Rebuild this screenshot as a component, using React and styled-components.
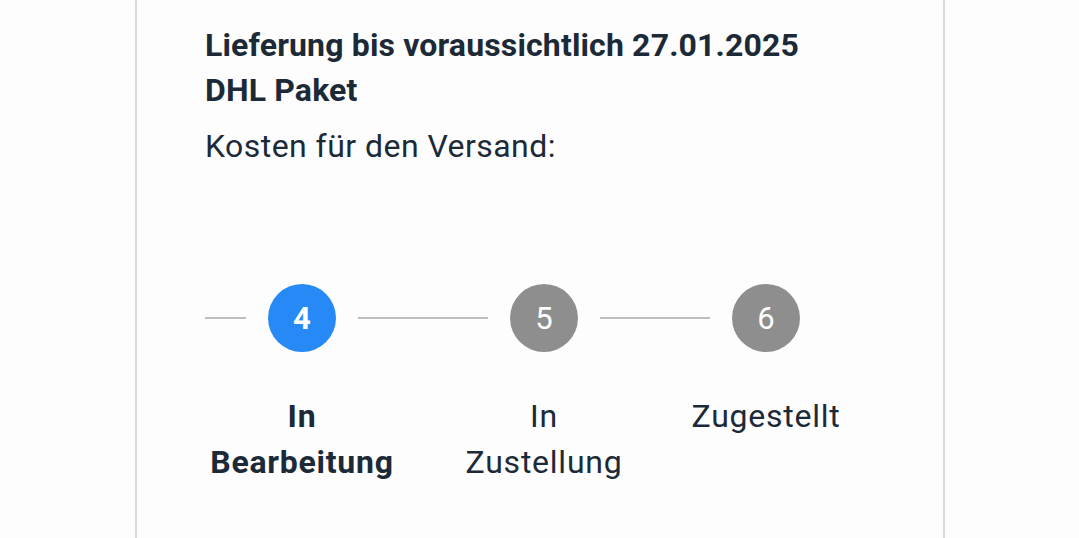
import React from 'react'
import styled, { createGlobalStyle } from 'styled-components'

const GlobalStyle = createGlobalStyle`
  html, body {
    margin: 0;
    padding: 0;
    background: #fdfdfd;
  }
  body {
    font-family: Roboto, "Noto Sans", "Liberation Sans", sans-serif;
    color: #1c2a38;
  }
`

const Page = styled.div`
  width: 1079px;
  height: 538px;
  overflow: hidden;
  display: flex;
`

const Card = styled.div`
  margin-left: 135px;
  width: 810px;
  height: 538px;
  box-sizing: border-box;
  border-left: 2px solid #d9d9d9;
  border-right: 2px solid #d9d9d9;
  padding: 23px 0 0 68px;
  display: flex;
  flex-direction: column;
`

const Heading = styled.div`
  font-size: 32px;
  font-weight: 700;
  line-height: 45px;
  letter-spacing: 0.15px;
`

const Cost = styled.div`
  margin-top: 11px;
  font-size: 32px;
  font-weight: 400;
  line-height: 45px;
  letter-spacing: 0.45px;
`

const Stepper = styled.div`
  margin-top: 115px;
  display: flex;
  align-items: flex-start;
`

const Connector = styled.div`
  width: ${p => p.$w}px;
  height: 2px;
  margin-top: 33px;
  background: #bebebe;
  flex-shrink: 0;
`

const Step = styled.div`
  width: 112px;
  flex-shrink: 0;
  display: flex;
  flex-direction: column;
  align-items: center;
`

const Circle = styled.div`
  width: 68px;
  height: 68px;
  border-radius: 50%;
  background: ${p => (p.$active ? '#2689f6' : '#8e8e8e')};
  color: #fff;
  display: flex;
  align-items: center;
  justify-content: center;
  font-size: 31px;
  font-weight: ${p => (p.$active ? 700 : 400)};
`

const Label = styled.div`
  margin-top: 41px;
  width: 260px;
  text-align: center;
  font-size: 32px;
  line-height: 46px;
  letter-spacing: 0.75px;
  font-weight: ${p => (p.$active ? 700 : 400)};
  white-space: nowrap;
`

const steps = [
  { n: 4, lines: ['In', 'Bearbeitung'], active: true, before: 41 },
  { n: 5, lines: ['In', 'Zustellung'], before: 130 },
  { n: 6, lines: ['Zugestellt'], before: 110 },
]

export default function App() {
  return (
    <Page>
      <GlobalStyle />
      <Card>
        <Heading>Lieferung bis voraussichtlich 27.01.2025</Heading>
        <Heading>DHL Paket</Heading>
        <Cost>Kosten für den Versand:</Cost>
        <Stepper>
          {steps.map(s => (
            <React.Fragment key={s.n}>
              <Connector $w={s.before} />
              <Step>
                <Circle $active={s.active}>{s.n}</Circle>
                <Label $active={s.active}>
                  {s.lines.map((l, i) => (
                    <div key={i}>{l}</div>
                  ))}
                </Label>
              </Step>
            </React.Fragment>
          ))}
        </Stepper>
      </Card>
    </Page>
  )
}
